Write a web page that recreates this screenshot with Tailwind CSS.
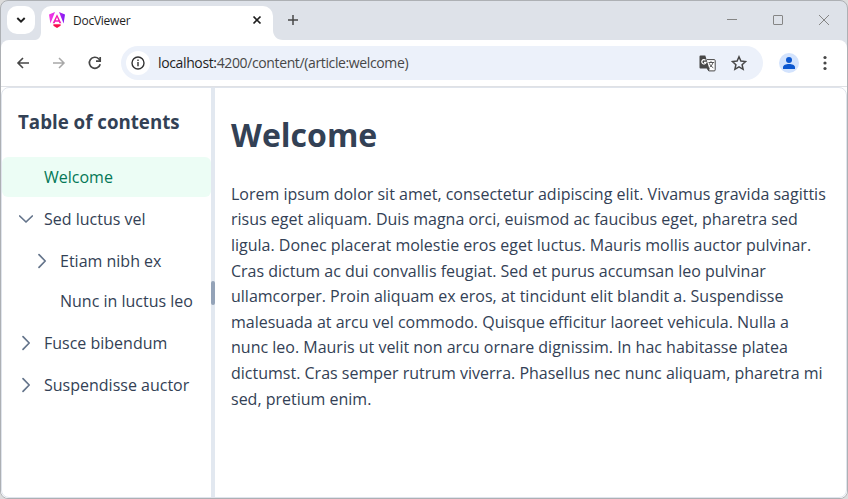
<!DOCTYPE html>
<html lang="en">
<head>
<meta charset="utf-8">
<title>DocViewer</title>
<script src="https://cdn.jsdelivr.net/npm/@tailwindcss/browser@4"></script>
</head>
<body class="bg-[#dcdcdc] font-['Open_Sans',sans-serif] text-[#334155]">
<div class="flex h-[499px] w-[848px] flex-col overflow-hidden rounded-lg border border-[#adb0b4] bg-[#dee2e9]">
  <!-- Tab strip -->
  <header class="flex h-[39px] shrink-0 items-start pl-1.5">
    <button class="mt-[5px] flex h-7 w-7 items-center justify-center rounded-[10px] bg-white">
      <svg class="h-3 w-3" viewBox="0 0 12 12" fill="none" stroke="#1f1f1f" stroke-width="1.9"><path d="M2.3 4 6 7.7 9.7 4"/></svg>
    </button>
    <svg class="mt-[31px] h-2 w-1.5 shrink-0" viewBox="0 0 6 8"><path d="M6 0v8H0C4 8 6 4 6 0Z" fill="#fff"/></svg>
    <div class="mt-[5px] flex h-[34px] w-[232px] items-center rounded-t-[10px] bg-white pr-2.5 pb-1.5 pl-2">
      <svg class="h-4 w-4" viewBox="0 0 16 16">
        <defs><linearGradient id="mark" x1="0" y1="0" x2="1" y2="0"><stop offset="0" stop-color="#f637e3"/><stop offset=".5" stop-color="#d22be8"/><stop offset="1" stop-color="#7b18f5"/></linearGradient></defs>
        <path fill="url(#mark)" d="M0 2.4 6 0 1.4 11.5ZM16 2.4 10 0l4.6 11.5Z"/>
        <path fill="#f520b7" d="M8 2.2 3.6 11.2h2l.7-1.5h3.4l.7 1.5h2ZM8 5.3l1.2 2.9H6.8Z"/>
        <path fill="#f80d4c" d="M4.4 12.2h7.2v1.5L8 16l-3.6-2.3Z"/>
      </svg>
      <span class="mt-px ml-2 text-xs tracking-[-0.25px] text-[#1f1f1f]">DocViewer</span>
      <svg class="ml-auto h-3 w-3" viewBox="0 0 12 12" stroke="#1f1f1f" stroke-width="1.7"><path d="m2.5 2.5 7 7m0-7-7 7"/></svg>
    </div>
    <svg class="mt-[29px] h-2.5 w-2.5 shrink-0" viewBox="0 0 10 10"><path d="M0 0v10h10C4 10 0 6 0 0Z" fill="#fff"/></svg>
    <svg class="mt-[13px] ml-1 h-3 w-3" viewBox="0 0 12 12" stroke="#474747" stroke-width="1.5"><path d="M6 1v10M1 6h10"/></svg>
    <div class="mt-[13px] mr-[18px] ml-auto flex items-center gap-9">
      <svg class="h-3 w-2.5" viewBox="0 0 10 12" stroke="#858585"><path d="M0 5.5h10"/></svg>
      <svg class="h-3 w-2.5" viewBox="0 0 10 12" fill="none" stroke="#858585"><rect x=".5" y="1.5" width="9" height="9" rx=".5"/></svg>
      <svg class="h-3 w-2.5" viewBox="0 0 10 12" stroke="#858585"><path d="m0 1 10 10M10 1 0 11"/></svg>
    </div>
  </header>
  <!-- Address bar -->
  <nav class="flex h-[47px] shrink-0 items-center rounded-t-lg border-b border-[#dfe1e5] bg-white pr-3.5 pl-3.5">
    <svg class="h-4 w-4" viewBox="0 0 16 16" fill="none" stroke="#474747" stroke-width="1.6"><path d="M14 8H3m5-5L3 8l5 5"/></svg>
    <svg class="ml-5 h-4 w-4" viewBox="0 0 16 16" fill="none" stroke="#a8a8a8" stroke-width="1.5"><path d="M2 8h11M8 3l5 5-5 5"/></svg>
    <svg class="ml-5 h-4 w-4" viewBox="0 0 16 16" fill="none" stroke="#474747" stroke-width="1.7"><path d="M13.2 9.2A5.5 5.5 0 1 1 11.9 4l1.4 1.5"/><path d="M13.2 2v4.1H9"/></svg>
    <div class="ml-[18px] flex h-[34px] w-[642px] items-center rounded-full bg-[#ecf1fa] pr-4 pl-[5px]">
      <span class="flex h-6 w-6 items-center justify-center rounded-full bg-white">
        <svg class="h-3.5 w-3.5" viewBox="0 0 14 14" fill="none" stroke="#333" stroke-width="1.4"><circle cx="7" cy="7" r="6"/><path d="M7 6v4.3M7 3.500v1.400"/></svg>
      </span>
      <span class="ml-2 text-sm tracking-[-0.37px] whitespace-nowrap text-[#474747]"><span class="text-[#1f1f1f]">localhost:</span>4200/content/(article:welcome)</span>
      <svg class="ml-auto h-[17px] w-[17px]" viewBox="0 0 17 17">
        <path d="M8 4.600h7.200q1 0 1 1v9.300q0 1-1 1H9.800L7.500 12" fill="#fff" stroke="#474747"/>
        <path fill="#474747" d="M1.500.5h4.800l4 12.900H1.500Q.5 13.400.5 12.400V1.500Q.5.5 1.500.5ZM8.200 13.400h3l-2 2.600Z"/>
        <path d="M6.500 5.200a2.200 2.200 0 1 0 .6 2.200H5" fill="none" stroke="#fff" stroke-width="1.200"/>
        <path d="M9.500 7.500h5.600M12 6.200v1.300m1.900 0c-.4 2-1.600 3.600-3.300 4.700m-.2-3.800c.8 2 2 3.200 3.900 4.400" fill="none" stroke="#474747" stroke-width=".9"/>
      </svg>
      <svg class="ml-[15px] h-4 w-4" viewBox="0 0 16 16" fill="none" stroke="#474747" stroke-width="1.500"><path d="m8 1.800 1.900 4.300 4.700.5-3.500 3.100 1 4.600L8 11.900l-4.100 2.400 1-4.600L1.400 6.600l4.700-.5Z"/></svg>
    </div>
    <svg class="ml-4 h-5 w-5" viewBox="0 0 20 20"><circle cx="10" cy="10" r="10" fill="#d3e3fd"/><circle cx="10" cy="7" r="3" fill="#0b57d0"/><path fill="#0b57d0" d="M4 16v-1.600c0-2.200 3-3.400 6-3.400s6 1.200 6 3.400V16Z"/></svg>
    <svg class="ml-auto h-4 w-4" viewBox="0 0 16 16" fill="#474747"><circle cx="8" cy="2.500" r="1.600"/><circle cx="8" cy="8" r="1.600"/><circle cx="8" cy="13.500" r="1.600"/></svg>
  </nav>
  <!-- Document viewer -->
  <div class="flex min-h-0 flex-1 bg-white">
  <div class="flex min-w-0 flex-1 rounded-lg border border-[#dfe4ec] bg-white">
    <aside class="w-[209px] shrink-0 pt-[19px]">
      <h2 class="pl-4 text-[18.72px] leading-[30px] font-bold whitespace-nowrap">Table of contents</h2>
      <ul class="mt-5 flex flex-col gap-0.5 leading-6">
        <li class="flex h-10 items-center rounded-md bg-[#ecfdf5] pl-[42px] text-[#047857]">Welcome</li>
        <li>
          <div class="flex h-10 items-center pl-4">
            <svg class="h-4 w-4" viewBox="0 0 16 16" fill="none" stroke="#64748b" stroke-width="1.700" stroke-linecap="round" stroke-linejoin="round"><path d="m1.700 5 6.300 6 6.300-6"/></svg>
            <span class="ml-2.5">Sed luctus vel</span>
          </div>
          <ul class="mt-0.5">
            <li class="flex h-10 items-center pl-8">
              <svg class="h-4 w-4" viewBox="0 0 16 16" fill="none" stroke="#64748b" stroke-width="1.700" stroke-linecap="round" stroke-linejoin="round"><path d="m5 1.700 6.200 6.300L5 14.300"/></svg>
              <span class="ml-2.5">Etiam nibh ex</span>
            </li>
            <li class="flex h-10 items-center pl-[58px] whitespace-nowrap">Nunc in luctus leo</li>
          </ul>
        </li>
        <li class="flex h-10 items-center pl-4">
          <svg class="h-4 w-4" viewBox="0 0 16 16" fill="none" stroke="#64748b" stroke-width="1.700" stroke-linecap="round" stroke-linejoin="round"><path d="m5 1.700 6.200 6.300L5 14.300"/></svg>
          <span class="ml-2.5">Fusce bibendum</span>
        </li>
        <li class="flex h-10 items-center pl-4">
          <svg class="h-4 w-4" viewBox="0 0 16 16" fill="none" stroke="#64748b" stroke-width="1.700" stroke-linecap="round" stroke-linejoin="round"><path d="m5 1.700 6.200 6.300L5 14.300"/></svg>
          <span class="ml-2.5 whitespace-nowrap">Suspendisse auctor</span>
        </li>
      </ul>
    </aside>
    <div class="flex w-1 shrink-0 items-center bg-[#e2e8f0]"><div class="h-6 w-1 rounded-sm bg-[#94a3b8]"></div></div>
    <main class="min-w-0 flex-1 pt-[21px] pl-4">
      <h1 class="text-[32px] leading-[51.2px] font-bold">Welcome</h1>
      <p class="mt-[21.6px] text-base leading-[25.6px] whitespace-nowrap">Lorem ipsum dolor sit amet, consectetur adipiscing elit. Vivamus gravida sagittis<br>risus eget aliquam. Duis magna orci, euismod ac faucibus eget, pharetra sed<br>ligula. Donec placerat molestie eros eget luctus. Mauris mollis auctor pulvinar.<br>Cras dictum ac dui convallis feugiat. Sed et purus accumsan leo pulvinar<br>ullamcorper. Proin aliquam ex eros, at tincidunt elit blandit a. Suspendisse<br>malesuada at arcu vel commodo. Quisque efficitur laoreet vehicula. Nulla a<br>nunc leo. Mauris ut velit non arcu ornare dignissim. In hac habitasse platea<br>dictumst. Cras semper rutrum viverra. Phasellus nec nunc aliquam, pharetra mi<br>sed, pretium enim.</p>
    </main>
  </div>
  </div>
</div>
</body>
</html>
